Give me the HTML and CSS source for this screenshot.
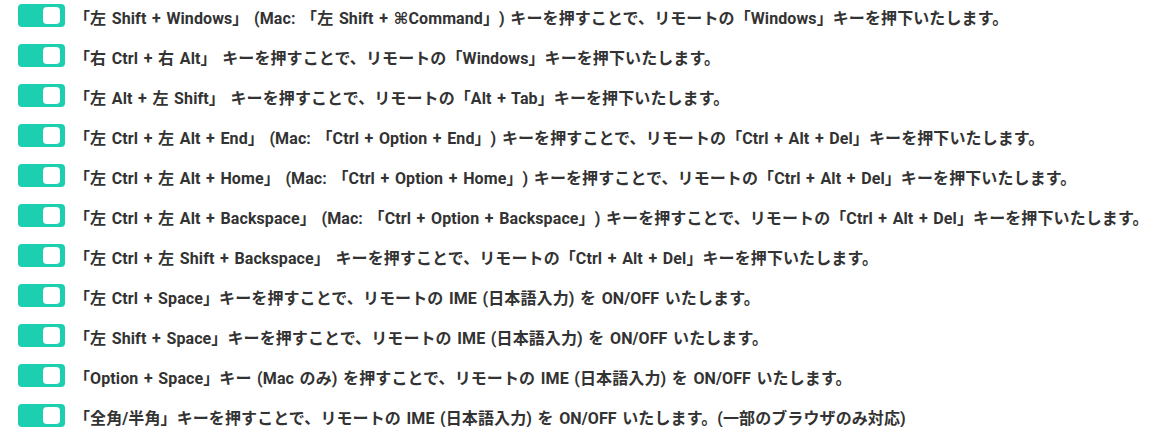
FILE: index.html
```html
<!DOCTYPE html>
<html lang="ja">
<head>
<meta charset="utf-8">
<link rel="stylesheet" href="styles.css">
</head>
<body>
<ul class="list">
  <li class="row"><span class="toggle"><span class="knob"></span></span><span class="label">「左 Shift + Windows」 (Mac: 「左 Shift + <span class="cmd">⌘</span>Command」) キーを押すことで、リモートの「Windows」キーを押下いたします。</span></li>
  <li class="row"><span class="toggle"><span class="knob"></span></span><span class="label">「右 Ctrl + 右 Alt」 キーを押すことで、リモートの「Windows」キーを押下いたします。</span></li>
  <li class="row"><span class="toggle"><span class="knob"></span></span><span class="label">「左 Alt + 左 Shift」 キーを押すことで、リモートの「Alt + Tab」キーを押下いたします。</span></li>
  <li class="row"><span class="toggle"><span class="knob"></span></span><span class="label">「左 Ctrl + 左 Alt + End」 (Mac: 「Ctrl + Option + End」) キーを押すことで、リモートの「Ctrl + Alt + Del」キーを押下いたします。</span></li>
  <li class="row"><span class="toggle"><span class="knob"></span></span><span class="label">「左 Ctrl + 左 Alt + Home」 (Mac: 「Ctrl + Option + Home」) キーを押すことで、リモートの「Ctrl + Alt + Del」キーを押下いたします。</span></li>
  <li class="row"><span class="toggle"><span class="knob"></span></span><span class="label">「左 Ctrl + 左 Alt + Backspace」 (Mac: 「Ctrl + Option + Backspace」) キーを押すことで、リモートの「Ctrl + Alt + Del」キーを押下いたします。</span></li>
  <li class="row"><span class="toggle"><span class="knob"></span></span><span class="label">「左 Ctrl + 左 Shift + Backspace」 キーを押すことで、リモートの「Ctrl + Alt + Del」キーを押下いたします。</span></li>
  <li class="row"><span class="toggle"><span class="knob"></span></span><span class="label">「左 Ctrl + Space」キーを押すことで、リモートの IME (日本語入力) を ON/OFF いたします。</span></li>
  <li class="row"><span class="toggle"><span class="knob"></span></span><span class="label">「左 Shift + Space」キーを押すことで、リモートの IME (日本語入力) を ON/OFF いたします。</span></li>
  <li class="row"><span class="toggle"><span class="knob"></span></span><span class="label">「Option + Space」キー (Mac のみ) を押すことで、リモートの IME (日本語入力) を ON/OFF いたします。</span></li>
  <li class="row"><span class="toggle"><span class="knob"></span></span><span class="label">「全角/半角」キーを押すことで、リモートの IME (日本語入力) を ON/OFF いたします。(一部のブラウザのみ対応)</span></li>
</ul>
</body>
</html>
```

FILE: styles.css
```css
html, body {
  margin: 0;
  padding: 0;
  background: #ffffff;
}
.list {
  list-style: none;
  margin: 0;
  padding: 4px 0 0 18px;
  display: flex;
  flex-direction: column;
  gap: 17px;
}
.row {
  display: flex;
  align-items: center;
  height: 23px;
  gap: 9px;
}
.toggle {
  flex: none;
  width: 47px;
  height: 23px;
  border-radius: 4px;
  background: #1dcfb1;
  display: flex;
  align-items: center;
  justify-content: flex-end;
  padding-right: 5px;
  box-sizing: border-box;
}
.knob {
  width: 17px;
  height: 17px;
  border-radius: 4px;
  background: #ffffff;
}
.label {
  font-family: Roboto, "Noto Sans CJK JP", sans-serif;
  font-weight: 700;
  font-size: 16px;
  letter-spacing: 0.1px;
  word-spacing: 1.5px;
  color: #333333;
  white-space: nowrap;
  text-spacing-trim: space-all;
  position: relative;
  top: 1px;
}
.cmd {
  font-family: "DejaVu Sans", sans-serif;
  font-weight: 700;
}
```
